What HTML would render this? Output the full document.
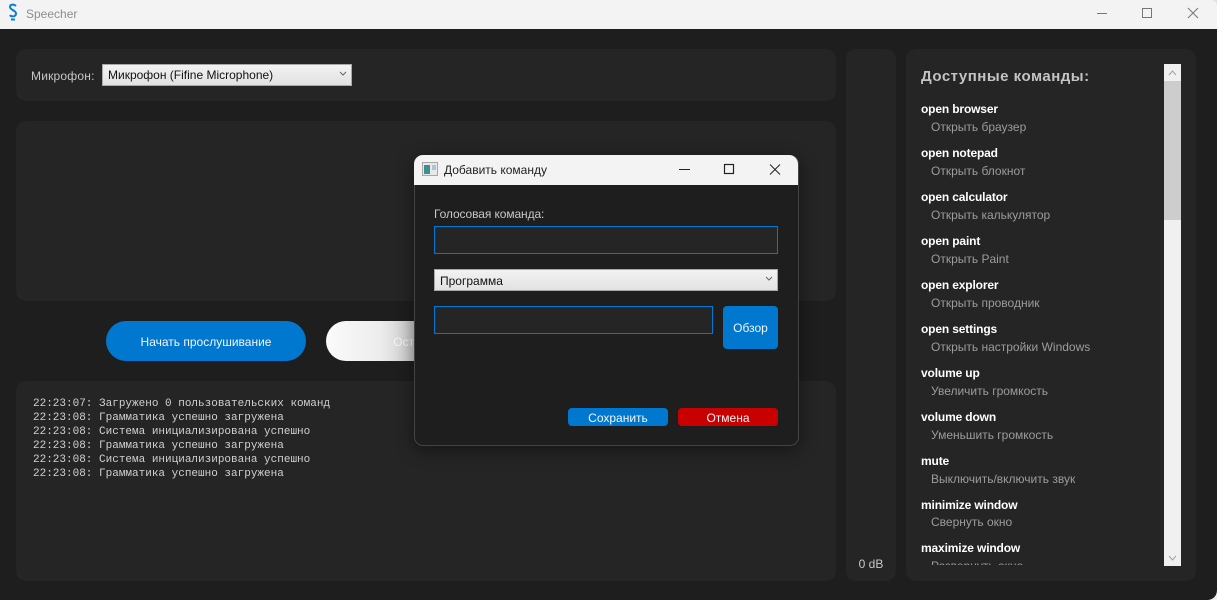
<!DOCTYPE html>
<html lang="ru"><head><meta charset="utf-8"><title>Speecher</title>
<style>
html,body{margin:0;padding:0;width:1217px;height:600px;overflow:hidden;background:#1e1e1e}
body{position:relative;font:12px "Liberation Sans","Noto Sans CJK SC",sans-serif;color:#ccc}
div,svg{position:absolute;box-sizing:border-box}
.t{white-space:nowrap;line-height:16px;height:16px}
.p{background:#252525;border-radius:10px}
.n{left:921px;color:#fff;font-weight:bold;font-size:12px;letter-spacing:-.15px}
.d{left:931px;color:#9c9c9c;font-size:12px;letter-spacing:0}
.l{left:33px;font:11px/14px "Liberation Mono",monospace;color:#d0d0d0;white-space:pre;height:14px}
.combo{background:linear-gradient(#f2f2f2,#e2e2e2);border:1px solid #a8a8a8;color:#111}
.inp{background:#252525;border:1px solid #0078d4}
</style></head><body>
<div style="left:0;top:0;width:1217px;height:29px;background:#f3f3f3"></div>
<svg style="left:6px;top:3px" width="14" height="19" viewBox="0 0 14 19" fill="none" stroke="#0a7fd0" stroke-width="2"><path d="M10 3 C8 1 4 1 4 4 C4 7 10 7 10 10.500 C10 14 5 14 4 12"/><path d="M5 16.500h4" stroke-width="2"/><circle cx="7" cy="7.500" r="1" fill="#0a7fd0" stroke="none"/></svg>
<div class="t" style="left:26px;top:6px;color:#8e8e8e;font-size:12px">Speecher</div>
<svg style="left:1090px;top:0" width="127" height="29" fill="none" stroke="#777" stroke-width="1"><path d="M7 13.500h10"/><rect x="52.500" y="8.500" width="9" height="9"/><path d="M98 8l10 10M108 8l-10 10"/></svg>

<div class="p" style="left:16px;top:49px;width:820px;height:52px"></div>
<div class="t" style="left:31px;top:68px;color:#c8c8c8;letter-spacing:.2px">Микрофон:</div>
<div class="combo" style="left:102px;top:64px;width:250px;height:22px"></div>
<div class="t" style="left:108px;top:67px;color:#111">Микрофон (Fifine Microphone)</div>
<svg style="left:339px;top:71px" width="8" height="6" fill="none" stroke="#666"><path d="M1 1l3 3 3-3"/></svg>

<div class="p" style="left:16px;top:121px;width:820px;height:180px"></div>
<div style="left:106px;top:321px;width:200px;height:40px;border-radius:20px;background:#0078d0"></div>
<div class="t" style="left:106px;top:334px;width:200px;text-align:center;color:#f4f4f4">Начать прослушивание</div>
<div style="left:326px;top:321px;width:200px;height:40px;border-radius:20px;background:linear-gradient(90deg,#fbfbfb 0,#f3f3f3 30px,#ececec 55px,#c8c8c8 88px,#bbb 200px)"></div>
<div class="t" style="left:326px;top:334px;width:200px;text-align:center;color:#f2f2f2">Остановить</div>
<div class="p" style="left:16px;top:381px;width:820px;height:200px"></div>
<div class="l" style="top:397px">22:23:07: Загружено 0 пользовательских команд</div>
<div class="l" style="top:411px">22:23:08: Грамматика успешно загружена</div>
<div class="l" style="top:425px">22:23:08: Система инициализирована успешно</div>
<div class="l" style="top:439px">22:23:08: Грамматика успешно загружена</div>
<div class="l" style="top:453px">22:23:08: Система инициализирована успешно</div>
<div class="l" style="top:467px">22:23:08: Грамматика успешно загружена</div>

<div class="p" style="left:846px;top:49px;width:50px;height:532px"></div>
<div class="t" style="left:846px;top:556px;width:50px;text-align:center;color:#c8c8c8">0 dB</div>

<div class="p" style="left:906px;top:49px;width:290px;height:532px"></div>
<div class="t" style="left:921px;top:69px;font-size:15px;font-weight:bold;color:#c4c4c4;letter-spacing:.5px">Доступные команды:</div>
<div class="t n" style="top:101px">open browser</div><div class="t d" style="top:119px">Открыть браузер</div>
<div class="t n" style="top:145px">open notepad</div><div class="t d" style="top:163px">Открыть блокнот</div>
<div class="t n" style="top:189px">open calculator</div><div class="t d" style="top:207px">Открыть калькулятор</div>
<div class="t n" style="top:233px">open paint</div><div class="t d" style="top:251px">Открыть Paint</div>
<div class="t n" style="top:277px">open explorer</div><div class="t d" style="top:295px">Открыть проводник</div>
<div class="t n" style="top:321px">open settings</div><div class="t d" style="top:339px">Открыть настройки Windows</div>
<div class="t n" style="top:365px">volume up</div><div class="t d" style="top:383px">Увеличить громкость</div>
<div class="t n" style="top:409px">volume down</div><div class="t d" style="top:427px">Уменьшить громкость</div>
<div class="t n" style="top:453px">mute</div><div class="t d" style="top:471px">Выключить/включить звук</div>
<div class="t n" style="top:497px">minimize window</div><div class="t d" style="top:514px">Свернуть окно</div>
<div class="t n" style="top:540px">maximize window</div>
<div class="t d" style="top:558px;height:7px;overflow:hidden">Развернуть окно</div>

<div style="left:1164px;top:64px;width:17px;height:502px;background:#f0f0f0"></div>
<div style="left:1164px;top:81px;width:17px;height:139px;background:#cdcdcd"></div>
<svg style="left:1164px;top:64px" width="17" height="502" fill="none" stroke="#a0a0a0"><path d="M5 11l3.500-4 3.500 4"/><path d="M5 492l3.500 4 3.500-4"/></svg>

<div style="left:414px;top:155px;width:385px;height:291px;background:#1e1e1e;border:1px solid #444;border-radius:9px;box-shadow:0 4px 18px rgba(0,0,0,.45);overflow:hidden"></div>
<div style="left:414px;top:155px;width:384px;height:30px;background:#f3f3f3;border-radius:9px 9px 0 0"></div>
<svg style="left:422px;top:162px" width="16" height="14"><rect x=".5" y=".5" width="15" height="13" fill="#e8e8e8" stroke="#a8a8a8"/><rect x="2" y="3" width="6" height="9" fill="#3f8f8c"/><rect x="10" y="3" width="4" height="5" fill="#a8c8d8"/></svg>
<div class="t" style="left:444px;top:162px;color:#222">Добавить команду</div>
<svg style="left:670px;top:155px" width="128" height="30" fill="none" stroke="#222"><path d="M9 14.500h11"/><rect x="54.500" y="9.500" width="9" height="9" stroke-width="1.200"/><path d="M100 9.500l10 10M110 9.500l-10 10"/></svg>

<div class="t" style="left:434px;top:206px;color:#c8c8c8;letter-spacing:-.1px">Голосовая команда:</div>
<div class="inp" style="left:434px;top:226px;width:344px;height:28px"></div>
<div class="combo" style="left:434px;top:269px;width:344px;height:22px"></div>
<div class="t" style="left:440px;top:273px;color:#111">Программа</div>
<svg style="left:765px;top:276px" width="8" height="6" fill="none" stroke="#666"><path d="M1 1l3 3 3-3"/></svg>
<div class="inp" style="left:434px;top:306px;width:279px;height:28px"></div>
<div style="left:723px;top:306px;width:55px;height:43px;background:#0078d0;border-radius:4px"></div>
<div class="t" style="left:723px;top:320px;width:55px;text-align:center;color:#f4f4f4">Обзор</div>
<div style="left:568px;top:408px;width:100px;height:18px;background:#0078d0;border-radius:4px"></div>
<div class="t" style="left:568px;top:410px;width:100px;text-align:center;color:#f4f4f4">Сохранить</div>
<div style="left:678px;top:408px;width:100px;height:18px;background:#c80000;border-radius:4px"></div>
<div class="t" style="left:678px;top:410px;width:100px;text-align:center;color:#f4f4f4">Отмена</div>

<svg style="left:1207px;top:590px" width="10" height="10"><path d="M10 0v10H0C6 10 10 6 10 0z" fill="#f0f0f0"/></svg>
<svg style="left:1211px;top:0" width="6" height="6"><path d="M0 0h6v6C6 2.500 3.500 0 0 0z" fill="#e0e0e0"/></svg>
</body></html>
